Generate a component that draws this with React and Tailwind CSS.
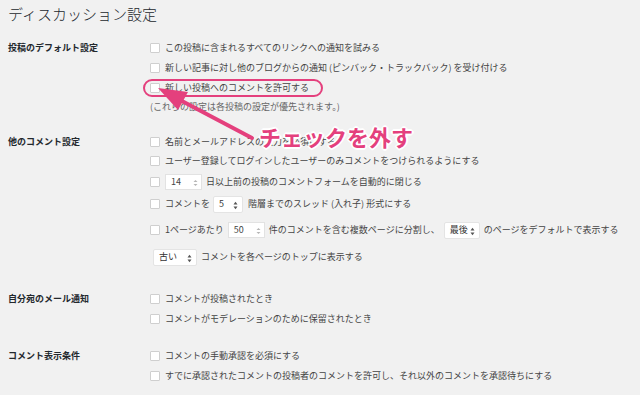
import React from "react";

const font = { fontFamily: '"Noto Sans CJK JP", "Noto Sans", sans-serif' };

function Box() {
  return <span className="inline-block w-[10px] h-[10px] shrink-0 border border-[#cfcfcf] bg-white rounded-[1px] mr-[5px]" />;
}

function Spin() {
  return (
    <svg width="5" height="8" viewBox="0 0 5 8" className="absolute right-[3px] top-[4px]">
      <path d="M0.5 3 L2.5 1 L4.5 3 Z" fill="#b5b5b5" />
      <path d="M0.5 5 L2.5 7 L4.5 5 Z" fill="#b5b5b5" />
    </svg>
  );
}

function Arrows() {
  return (
    <svg width="5" height="9" viewBox="0 0 5 9" className="absolute right-[4px] top-[4px]">
      <path d="M0.5 3.5 L2.5 0.8 L4.5 3.5 Z" fill="#555" />
      <path d="M0.5 5.5 L2.5 8.2 L4.5 5.5 Z" fill="#555" />
    </svg>
  );
}

function NumInput({ value, w }) {
  return (
    <span className={`relative inline-flex items-center h-[16px] bg-white border border-[#e2e2e2] pl-[5px] text-[#444] ${w}`}>
      {value}
      <Spin />
    </span>
  );
}

function Select({ value, w }) {
  return (
    <span className={`relative inline-flex items-center h-[17px] bg-white border border-[#e4e4e4] rounded-[2px] pl-[5px] text-[#333] ${w}`}>
      {value}
      <Arrows />
    </span>
  );
}

function Row({ h, children, box = true, className = "" }) {
  return (
    <div className={`flex items-center ${h} ${className}`}>
      {box && <Box />}
      {children}
    </div>
  );
}

function Section({ label, labelH, children, className = "" }) {
  return (
    <div className={`flex ${className}`}>
      <div className={`w-[142px] shrink-0 flex items-center ${labelH} font-bold text-[#23282d]`}>{label}</div>
      <div className="flex flex-col">{children}</div>
    </div>
  );
}

export default function App() {
  return (
    <div style={font} className="relative w-[640px] h-[395px] overflow-hidden bg-[#f1f1f1] pl-[8px] text-[9px] leading-[12px] text-[#444]">
      <div className="h-[38px] pt-[4px] text-[15px] leading-[20px] font-light text-[#23282d]">ディスカッション設定</div>

      <Section label="投稿のデフォルト設定" labelH="h-[20px]">
        <Row h="h-[20px]">この投稿に含まれるすべてのリンクへの通知を試みる</Row>
        <Row h="h-[20px]">新しい記事に対し他のブログからの通知 (ピンバック・トラックバック) を受け付ける</Row>
        <Row h="h-[20px]">新しい投稿へのコメントを許可する</Row>
        <Row h="h-[18px]" box={false} className="text-[#666]">(これらの設定は各投稿の設定が優先されます。)</Row>
      </Section>

      <Section label="他のコメント設定" labelH="h-[18px]" className="mt-[17px]">
        <Row h="h-[18px]">名前とメールアドレスの入力を必須にする</Row>
        <Row h="h-[20px]">ユーザー登録してログインしたユーザーのみコメントをつけられるようにする</Row>
        <Row h="h-[22px]">
          <NumInput value="14" w="w-[37px]" />
          <span className="ml-[4px]">日以上前の投稿のコメントフォームを自動的に閉じる</span>
        </Row>
        <Row h="h-[22px]">
          コメントを
          <span className="ml-[3px]"><Select value="5" w="w-[30px]" /></span>
          <span className="ml-[5px]">階層までのスレッド (入れ子) 形式にする</span>
        </Row>
        <Row h="h-[30px]">
          1ページあたり
          <span className="ml-[4px]"><NumInput value="50" w="w-[37px]" /></span>
          <span className="ml-[4px]">件のコメントを含む複数ページに分割し、</span>
          <span className="ml-[4px]"><Select value="最後" w="w-[36px]" /></span>
          <span className="ml-[4px]">のページをデフォルトで表示する</span>
        </Row>
        <Row h="h-[24px]" box={false}>
          <span className="ml-[3px]"><Select value="古い" w="w-[44px]" /></span>
          <span className="ml-[4px]">コメントを各ページのトップに表示する</span>
        </Row>
      </Section>

      <Section label="自分宛のメール通知" labelH="h-[20px]" className="mt-[20px]">
        <Row h="h-[20px]">コメントが投稿されたとき</Row>
        <Row h="h-[20px]">コメントがモデレーションのために保留されたとき</Row>
      </Section>

      <Section label="コメント表示条件" labelH="h-[20px]" className="mt-[17px]">
        <Row h="h-[20px]">コメントの手動承認を必須にする</Row>
        <Row h="h-[20px]">すでに承認されたコメントの投稿者のコメントを許可し、それ以外のコメントを承認待ちにする</Row>
      </Section>

      {/* annotation overlay */}
      <div className="absolute left-[143px] top-[79px] w-[180px] h-[18px] rounded-full border-2 border-[#e4407d]" />
      <svg className="absolute left-0 top-0 pointer-events-none" width="640" height="395">
        <line x1="252" y1="138" x2="180" y2="100" stroke="#e4407d" strokeWidth="4" strokeLinecap="round" />
        <path d="M158 88 L188 92 L178 110 Z" fill="#e4407d" />
      </svg>
      <div className="absolute left-[259px] top-[122px] text-[22px] leading-[28px] font-bold text-[#e4407d] [text-shadow:1px_1px_0_#fff,-1px_-1px_0_#fff,1px_-1px_0_#fff,-1px_1px_0_#fff,2px_0_0_#fff,-2px_0_0_#fff,0_2px_0_#fff,0_-2px_0_#fff]">
        チェックを外す
      </div>
    </div>
  );
}
